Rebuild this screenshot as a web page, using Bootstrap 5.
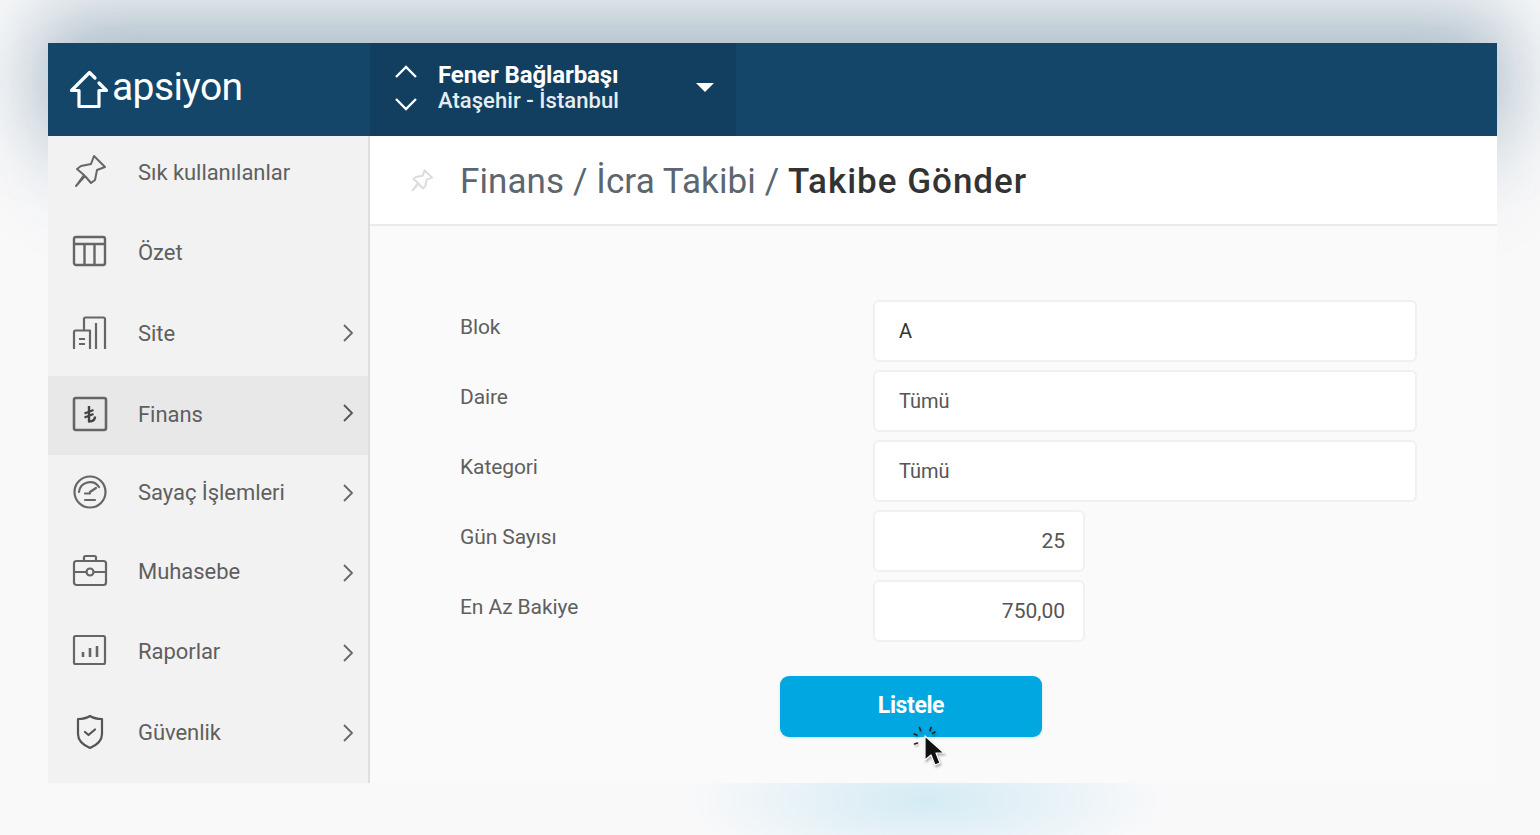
<!DOCTYPE html>
<html lang="tr">
<head>
<meta charset="utf-8">
<title>Takibe Gönder</title>
<link href="https://cdn.jsdelivr.net/npm/bootstrap@5.3.0/dist/css/bootstrap.min.css" rel="stylesheet">
<style>
html,body{height:100%;}
body{margin:0;overflow:hidden;font-family:Roboto,"Liberation Sans",sans-serif;background-color:#f9f9fa;
  background-image:radial-gradient(ellipse 240px 75px at 925px 800px,rgba(190,226,240,.62),rgba(190,226,240,0));}
.stage{padding:43px 43px 52px 48px;height:835px;}
.appwin{height:740px;background:#fafafa;}
.topbar{height:93px;background:#134669;color:#fff;flex:none;box-shadow:0 -20px 80px 10px rgba(19,70,105,.34),0 50px 90px 0 rgba(19,70,105,.14);}
.brand{width:322px;padding-left:21px;gap:1px;}
.brand-name{font-size:39px;font-weight:400;letter-spacing:-.6px;line-height:1;margin-top:-5px;}
.sitepick{width:366px;background:#123f60;padding:0 22px 4px 24px;}
.site-arrows{gap:18px;width:44px;}
.site-a{font-size:24px;font-weight:700;line-height:26px;letter-spacing:-.1px;}
.site-b{font-size:22px;font-weight:500;line-height:26px;letter-spacing:.05px;color:#e6edf2;}
.caret-d{width:0;height:0;border-left:9px solid transparent;border-right:9px solid transparent;border-top:9px solid #fff;}
.bodyrow{height:647px;position:relative;}
.sidenav{width:322px;background:#f2f2f2;border-right:2px solid #dedede;flex:none;}
.navrow{height:80px;padding:0 14px 8px 21px;color:#5f5f5f;font-size:22px;letter-spacing:-.05px;}
.navrow .lbl{margin-left:27px;flex:1;}
.navrow:nth-child(3),.navrow:nth-child(5),.navrow:nth-child(8){padding-bottom:6px;}
.navrow.on{background:#e8e8e8;padding-bottom:3px;height:79px;}
.nav-ico{width:42px;height:42px;flex:none;}
.navrow:nth-child(3) .chev{margin-top:0;}
.navrow:nth-child(4) .chev{margin-top:-2px;}
.navrow:nth-child(5) .chev,.navrow:nth-child(8) .chev{margin-top:2px;}
.navrow:nth-child(6) .chev,.navrow:nth-child(7) .chev{margin-top:4px;}
.chev{flex:none;}
.mainpane{background:#fafafa;min-width:0;}
.titlebar{height:90px;background:#fff;border-bottom:2px solid #ebebeb;padding:2px 0 0 38px;gap:24px;}
.pagetitle{font-size:35px;font-weight:400;color:#5b6670;margin:0;line-height:1;letter-spacing:.1px;}
.pagetitle b{font-weight:500;color:#333;letter-spacing:1px;}
.formwrap{padding:74px 80px 0 90px;}
.frow{margin-bottom:8px;height:62px;}
.flabel{width:413px;flex:none;font-size:21px;letter-spacing:-.1px;color:#5f5f5f;padding-top:14px;line-height:26px;}
.fbox{height:62px;border:2px solid #f0f0f0;border-radius:6px;background:#fff;font-size:20px;color:#555;padding:0 18px 0 24px;box-shadow:none;flex:1;}
.fbox:focus{border-color:#f0f0f0;box-shadow:none;}
.fbox.narrow{flex:none;width:212px;text-align:right;font-size:21px;}
.fbox.dark{color:#333;}
.listbtn{width:262px;height:61px;background:#00a7e1;border:0;border-radius:9px;color:#fff;font-size:23px;font-weight:700;letter-spacing:-.4px;box-shadow:0 1px 3px rgba(0,0,0,.12);}
.listbtn:hover{background:#00a7e1;color:#fff;}
.btnslot{padding-left:320px;margin-top:34px;position:relative;}
.cursor{position:absolute;left:451px;top:47px;width:38px;height:44px;filter:drop-shadow(1px 2px 1px rgba(0,0,0,.3));}
</style>
</head>
<body>
<div class="stage">
<div class="appwin d-flex flex-column">
  <header class="topbar d-flex align-items-stretch">
    <div class="brand d-flex align-items-center">
      <svg width="42" height="40" viewBox="0 0 42 40" fill="none" stroke="#fff" stroke-width="3.2" stroke-linejoin="round" stroke-linecap="round"><path d="M20.5 2.500 2.500 20.500H10V36.500H30V20.500H37.500L30 13M20.500 2.500 26 8"/></svg>
      <span class="brand-name">apsiyon</span>
    </div>
    <div class="sitepick d-flex align-items-center">
      <div class="site-arrows d-flex flex-column justify-content-center">
        <svg width="24" height="15" viewBox="0 0 24 15" fill="none" stroke="#fff" stroke-width="2.3"><path d="M2 13 12 3l10 10"/></svg>
        <svg width="24" height="15" viewBox="0 0 24 15" fill="none" stroke="#fff" stroke-width="2.3"><path d="M2 2l10 10L22 2"/></svg>
      </div>
      <div class="flex-grow-1 text-nowrap">
        <div class="site-a">Fener Bağlarbaşı</div>
        <div class="site-b">Ataşehir - İstanbul</div>
      </div>
      <span class="caret-d"></span>
    </div>
  </header>
  <div class="bodyrow d-flex flex-grow-1">
    <nav class="sidenav d-flex flex-column">
      <div class="navrow d-flex align-items-center">
        <svg class="nav-ico" viewBox="0 0 42 42" fill="none" stroke="#666" stroke-width="2" stroke-linejoin="round" stroke-linecap="round"><path d="M25 5l11 11-8 3-2 10-4 3-6-7-9 10 8-11-7-6 4-3 10-2z"/></svg>
        <span class="lbl">Sık kullanılanlar</span>
      </div>
      <div class="navrow d-flex align-items-center">
        <svg class="nav-ico" viewBox="0 0 42 42" fill="none" stroke="#666" stroke-width="2.4" stroke-linejoin="round"><rect x="5" y="6" width="31" height="28" rx="2"/><path d="M5 13h31M15.500 13v21M25.500 13v21"/></svg>
        <span class="lbl">Özet</span>
      </div>
      <div class="navrow d-flex align-items-center">
        <svg class="nav-ico" viewBox="0 0 42 42" fill="none" stroke="#666" stroke-width="2.2" stroke-linejoin="round"><path d="M5 37V20a1.500 1.500 0 0 1 1.500-1.500H21V37M15 18V7a1.500 1.500 0 0 1 1.500-1.500h18a1.500 1.500 0 0 1 1.500 1.500v30M27 11v26M10 27h6M10 32h6"/></svg>
        <span class="lbl">Site</span>
        <svg class="chev" width="12" height="20" viewBox="0 0 12 20" fill="none" stroke="#666" stroke-width="1.800"><path d="M2 2l8 8-8 8"/></svg>
      </div>
      <div class="navrow on d-flex align-items-center">
        <svg class="nav-ico" viewBox="0 0 42 42" fill="none" stroke="#666" stroke-width="2.600" stroke-linejoin="round"><rect x="5" y="5" width="32" height="32" rx="2"/><path stroke="#444" stroke-width="2.400" d="M20 13v15.500c3.500 0 6-1.500 6-5M15.500 20.500l9-3.500M15.500 24.500l9-3.500"/></svg>
        <span class="lbl">Finans</span>
        <svg class="chev" width="12" height="20" viewBox="0 0 12 20" fill="none" stroke="#555" stroke-width="1.800"><path d="M2 2l8 8-8 8"/></svg>
      </div>
      <div class="navrow d-flex align-items-center">
        <svg class="nav-ico" viewBox="0 0 42 42" fill="none" stroke="#666" stroke-width="2.200" stroke-linecap="round"><circle cx="21" cy="21" r="15.500"/><path d="M10 21a11 11 0 0 1 20-5M16 29h10M21 21l6-4M16 22.500h5"/></svg>
        <span class="lbl">Sayaç İşlemleri</span>
        <svg class="chev" width="12" height="20" viewBox="0 0 12 20" fill="none" stroke="#666" stroke-width="1.800"><path d="M2 2l8 8-8 8"/></svg>
      </div>
      <div class="navrow d-flex align-items-center">
        <svg class="nav-ico" viewBox="0 0 42 42" fill="none" stroke="#666" stroke-width="2.200" stroke-linejoin="round"><rect x="5" y="11" width="32" height="24" rx="2.500"/><path d="M15 11V7.500A1.500 1.500 0 0 1 16.500 6h9A1.500 1.500 0 0 1 27 7.500V11M5 22h12M25 22h12"/><circle cx="21" cy="22" r="3.500"/></svg>
        <span class="lbl">Muhasebe</span>
        <svg class="chev" width="12" height="20" viewBox="0 0 12 20" fill="none" stroke="#666" stroke-width="1.800"><path d="M2 2l8 8-8 8"/></svg>
      </div>
      <div class="navrow d-flex align-items-center">
        <svg class="nav-ico" viewBox="0 0 42 42" fill="none" stroke="#666" stroke-width="2.200" stroke-linejoin="round"><rect x="5" y="6" width="31" height="28" rx="1.500"/><path stroke-width="2.600" d="M14 22v5M21 18v9M28 16v11"/></svg>
        <span class="lbl">Raporlar</span>
        <svg class="chev" width="12" height="20" viewBox="0 0 12 20" fill="none" stroke="#666" stroke-width="1.800"><path d="M2 2l8 8-8 8"/></svg>
      </div>
      <div class="navrow d-flex align-items-center">
        <svg class="nav-ico" viewBox="0 0 42 42" fill="none" stroke="#555" stroke-width="2.200" stroke-linejoin="round" stroke-linecap="round"><path d="M21 5c4 2.500 8 3 12 3v15c0 7-5 11-12 14C14 34 9 30 9 23V8c4 0 8-.500 12-3z"/><path d="M16 21l3.500 3 6.500-5.500"/></svg>
        <span class="lbl">Güvenlik</span>
        <svg class="chev" width="12" height="20" viewBox="0 0 12 20" fill="none" stroke="#666" stroke-width="1.800"><path d="M2 2l8 8-8 8"/></svg>
      </div>
    </nav>
    <main class="mainpane flex-grow-1">
      <div class="titlebar d-flex align-items-center">
        <svg width="28" height="28" viewBox="0 0 42 42" fill="none" stroke="#dcdcdc" stroke-width="3" stroke-linejoin="round" stroke-linecap="round"><path d="M25 5l11 11-8 3-2 10-4 3-6-7-9 10 8-11-7-6 4-3 10-2z"/></svg>
        <h1 class="pagetitle">Finans / İcra Takibi / <b>Takibe Gönder</b></h1>
      </div>
      <form class="formwrap">
        <div class="frow d-flex"><label class="flabel">Blok</label><input class="form-control fbox dark" value="A"></div>
        <div class="frow d-flex"><label class="flabel">Daire</label><input class="form-control fbox" value="Tümü"></div>
        <div class="frow d-flex"><label class="flabel">Kategori</label><input class="form-control fbox" value="Tümü"></div>
        <div class="frow d-flex"><label class="flabel">Gün Sayısı</label><input class="form-control fbox narrow" value="25"></div>
        <div class="frow d-flex"><label class="flabel">En Az Bakiye</label><input class="form-control fbox narrow" value="750,00"></div>
        <div class="btnslot">
          <button type="button" class="btn listbtn">Listele</button>
          <svg class="cursor" viewBox="0 0 38 44"><g stroke="#222" stroke-width="1.600" stroke-linecap="round"><path d="M8.500 4.500l1 3M20 4.500l-1 3M24 9l-2.500 1.500M3 11l3 1M3.500 21l3-1"/></g><path d="M14 13v24l6-5 4 10 5-2-4-10h8z" fill="#111" stroke="#fff" stroke-width="1.200" stroke-linejoin="round"/></svg>
        </div>
      </form>
    </main>
  </div>
</div>
</div>
<script src="https://cdn.jsdelivr.net/npm/bootstrap@5.3.0/dist/js/bootstrap.bundle.min.js"></script>
</body>
</html>
